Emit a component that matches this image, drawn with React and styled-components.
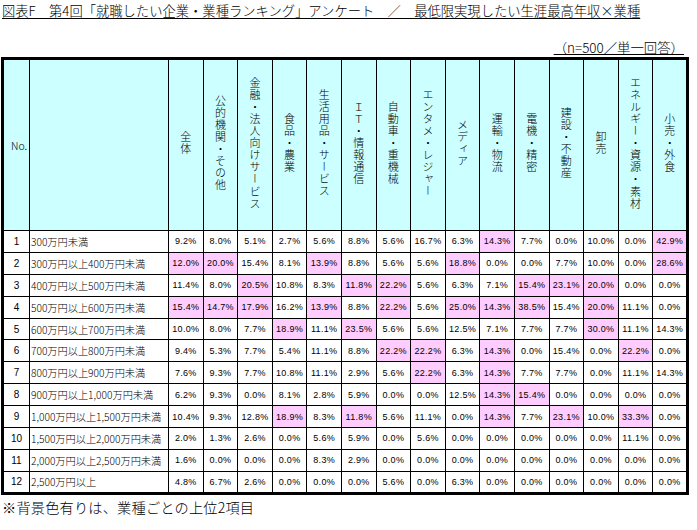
import React from 'react';
import styled, { createGlobalStyle } from 'styled-components';

const GlobalStyle = createGlobalStyle`
  body {
    margin: 0;
    background: #ffffff;
    color: #000000;
    font-family: "Noto Sans CJK JP", "Liberation Sans", sans-serif;
    font-weight: 300;
  }
`;

const Page = styled.div`
  width: 697px;
  height: 530px;
  position: relative;
`;

const Title = styled.h1`
  margin: 0;
  padding: 2px 0 0 2px;
  font-size: 13.3px;
  font-weight: 300;
  line-height: 18px;
  white-space: nowrap;
  text-decoration: underline;
  text-underline-offset: 2px;
`;

const SampleNote = styled.div`
  display: flex;
  justify-content: flex-end;
  margin-top: 20px;
  padding-right: 13px;
  height: 17px;
  font-size: 13.4px;
  line-height: 15px;
  text-decoration: underline;
  text-underline-offset: 1px;
`;

const Table = styled.table`
  border-collapse: collapse;
  table-layout: fixed;
  width: 688px;
  margin-left: 1px;
  border: 3px solid #000;
`;

const HeadRow = styled.tr`
  height: 172px;
  background: #ccffff;
`;

const HeadCell = styled.th`
  border: 1px solid #000;
  padding: 0;
  font-weight: 300;
  font-size: 10.5px;
  text-align: ${({ $align }) => $align || 'center'};
  padding-left: ${({ $align }) => ($align === 'left' ? '7px' : '0')};
  vertical-align: middle;
`;

const VerticalText = styled.span`
  display: inline-block;
  writing-mode: vertical-rl;
  text-orientation: upright;
  font-size: 11px;
  letter-spacing: 1.1px;
  line-height: 12px;
`;

const BodyRow = styled.tr`
  height: 21.9px;
`;

const NoCell = styled.td`
  border: 1px solid #000;
  padding: 0;
  text-align: center;
  font-family: "Liberation Sans", sans-serif;
  font-weight: normal;
  font-size: 10px;
`;

const LabelCell = styled.td`
  border: 1px solid #000;
  padding: 0 0 0 1px;
  font-size: 10.2px;
  white-space: nowrap;
  overflow: hidden;
`;

const Cell = styled.td`
  border: 1px solid #000;
  padding: 0;
  text-align: center;
  font-family: "Liberation Sans", sans-serif;
  font-weight: normal;
  font-size: 9px;
  letter-spacing: 0.3px;
  background: ${({ $hl }) => ($hl ? '#ffccff' : '#ffffff')};
`;

const Footnote = styled.p`
  margin: 2px 0 0 2px;
  font-size: 14.2px;
  line-height: 20px;
  letter-spacing: 0.2px;
`;

const industries = [
  '全体',
  '公的機関・その他',
  '金融・法人向けサービス',
  '食品・農業',
  '生活用品・サービス',
  'ＩＴ・情報通信',
  '自動車・重機械',
  'エンタメ・レジャー',
  'メディア',
  '運輸・物流',
  '電機・精密',
  '建設・不動産',
  '卸売',
  'エネルギー・資源・素材',
  '小売・外食',
];

// '*' marks a highlighted (top 2) cell
const rows = [
  ['300万円未満', '9.2 8.0 5.1 2.7 5.6 8.8 5.6 16.7 6.3 14.3* 7.7 0.0 10.0 0.0 42.9*'],
  ['300万円以上400万円未満', '12.0* 20.0* 15.4 8.1 13.9* 8.8 5.6 5.6 18.8* 0.0 0.0 7.7 10.0 0.0 28.6*'],
  ['400万円以上500万円未満', '11.4 8.0 20.5* 10.8 8.3 11.8* 22.2* 5.6 6.3 7.1 15.4* 23.1* 20.0* 0.0 0.0'],
  ['500万円以上600万円未満', '15.4* 14.7* 17.9* 16.2 13.9* 8.8 22.2* 5.6 25.0* 14.3* 38.5* 15.4 20.0* 11.1 0.0'],
  ['600万円以上700万円未満', '10.0 8.0 7.7 18.9* 11.1 23.5* 5.6 5.6 12.5 7.1 7.7 7.7 30.0* 11.1 14.3'],
  ['700万円以上800万円未満', '9.4 5.3 7.7 5.4 11.1 8.8 22.2* 22.2* 6.3 14.3* 0.0 15.4 0.0 22.2* 0.0'],
  ['800万円以上900万円未満', '7.6 9.3 7.7 10.8 11.1 2.9 5.6 22.2* 6.3 14.3* 7.7 7.7 0.0 11.1 14.3'],
  ['900万円以上1,000万円未満', '6.2 9.3 0.0 8.1 2.8 5.9 0.0 0.0 12.5 14.3* 15.4* 0.0 0.0 0.0 0.0'],
  ['1,000万円以上1,500万円未満', '10.4 9.3 12.8 18.9* 8.3 11.8* 5.6 11.1 0.0 14.3* 7.7 23.1* 10.0 33.3* 0.0'],
  ['1,500万円以上2,000万円未満', '2.0 1.3 2.6 0.0 5.6 5.9 0.0 5.6 0.0 0.0 0.0 0.0 0.0 11.1 0.0'],
  ['2,000万円以上2,500万円未満', '1.6 0.0 0.0 0.0 8.3 2.9 0.0 0.0 0.0 0.0 0.0 0.0 0.0 0.0 0.0'],
  ['2,500万円以上', '4.8 6.7 2.6 0.0 0.0 0.0 5.6 0.0 6.3 0.0 0.0 0.0 0.0 0.0 0.0'],
];

export default function App() {
  return (
    <Page>
      <GlobalStyle />
      <Title>図表F　第4回「就職したい企業・業種ランキング」アンケート　／　最低限実現したい生涯最高年収×業種</Title>
      <SampleNote>（n=500／単一回答）</SampleNote>
      <Table>
        <colgroup>
          <col style={{ width: 27 }} />
          <col style={{ width: 139 }} />
          {industries.map((name) => (
            <col key={name} />
          ))}
        </colgroup>
        <thead>
          <HeadRow>
            <HeadCell $align="left">No.</HeadCell>
            <HeadCell />
            {industries.map((name) => (
              <HeadCell key={name}>
                <VerticalText>{name}</VerticalText>
              </HeadCell>
            ))}
          </HeadRow>
        </thead>
        <tbody>
          {rows.map(([label, values], i) => (
            <BodyRow key={label}>
              <NoCell>{i + 1}</NoCell>
              <LabelCell>{label}</LabelCell>
              {values.split(' ').map((v, j) => {
                const hl = v.endsWith('*');
                return (
                  <Cell key={j} $hl={hl}>
                    {(hl ? v.slice(0, -1) : v) + '%'}
                  </Cell>
                );
              })}
            </BodyRow>
          ))}
        </tbody>
      </Table>
      <Footnote>※背景色有りは、業種ごとの上位2項目</Footnote>
    </Page>
  );
}
